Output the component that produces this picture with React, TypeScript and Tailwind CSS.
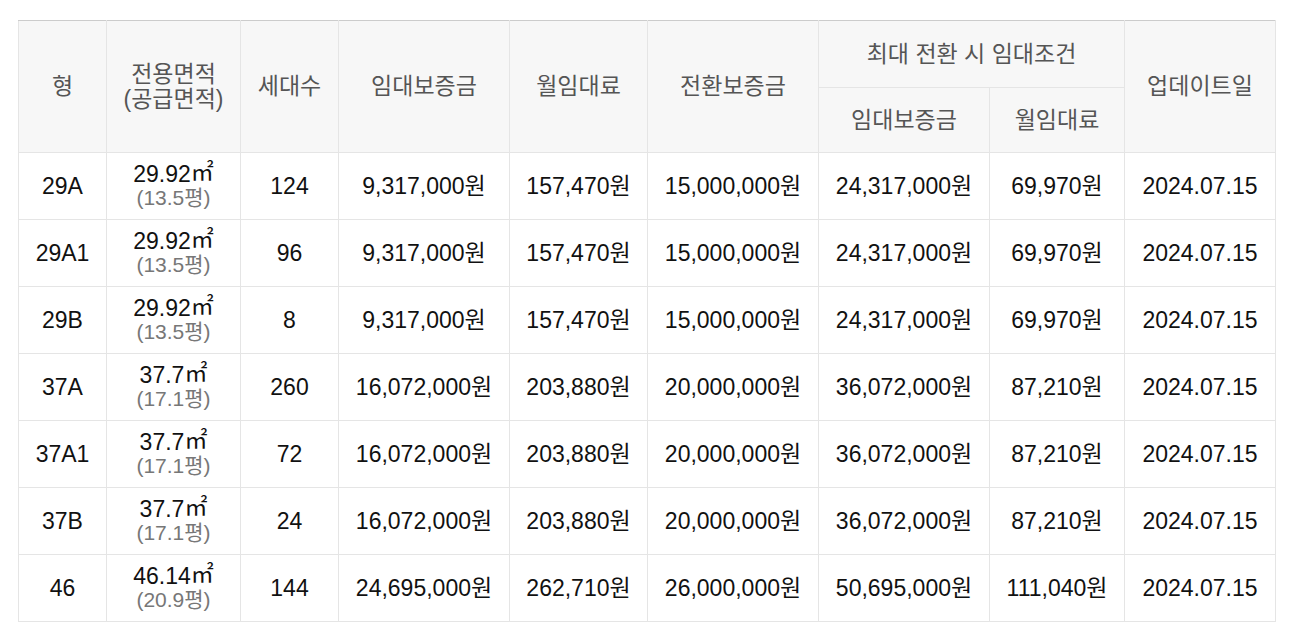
import React from 'react';

type Row = {
  type: string;
  area: string;
  pyeong: string;
  units: string;
  deposit: string;
  rent: string;
  convDeposit: string;
  maxDeposit: string;
  maxRent: string;
  updated: string;
};

const rows: Row[] = [
  { type: '29A', area: '29.92', pyeong: '13.5', units: '124', deposit: '9,317,000원', rent: '157,470원', convDeposit: '15,000,000원', maxDeposit: '24,317,000원', maxRent: '69,970원', updated: '2024.07.15' },
  { type: '29A1', area: '29.92', pyeong: '13.5', units: '96', deposit: '9,317,000원', rent: '157,470원', convDeposit: '15,000,000원', maxDeposit: '24,317,000원', maxRent: '69,970원', updated: '2024.07.15' },
  { type: '29B', area: '29.92', pyeong: '13.5', units: '8', deposit: '9,317,000원', rent: '157,470원', convDeposit: '15,000,000원', maxDeposit: '24,317,000원', maxRent: '69,970원', updated: '2024.07.15' },
  { type: '37A', area: '37.7', pyeong: '17.1', units: '260', deposit: '16,072,000원', rent: '203,880원', convDeposit: '20,000,000원', maxDeposit: '36,072,000원', maxRent: '87,210원', updated: '2024.07.15' },
  { type: '37A1', area: '37.7', pyeong: '17.1', units: '72', deposit: '16,072,000원', rent: '203,880원', convDeposit: '20,000,000원', maxDeposit: '36,072,000원', maxRent: '87,210원', updated: '2024.07.15' },
  { type: '37B', area: '37.7', pyeong: '17.1', units: '24', deposit: '16,072,000원', rent: '203,880원', convDeposit: '20,000,000원', maxDeposit: '36,072,000원', maxRent: '87,210원', updated: '2024.07.15' },
  { type: '46', area: '46.14', pyeong: '20.9', units: '144', deposit: '24,695,000원', rent: '262,710원', convDeposit: '26,000,000원', maxDeposit: '50,695,000원', maxRent: '111,040원', updated: '2024.07.15' },
];

const th = 'border border-[#e5e5e5] bg-[#f7f7f7] font-normal text-[#555555] text-center align-middle leading-[25px]';
const td = 'border border-[#e5e5e5] text-center align-middle text-[#111111] leading-[24px]';

export default function App() {
  return (
    <div className="bg-white pl-[18px] pt-[20px] pr-[17px] pb-[16px]">
      <table
        className="w-[1257px] table-fixed border-collapse border-t border-t-[#cccccc] text-[23px]"
        style={{ fontFamily: '"Liberation Sans", Arial, "Noto Sans CJK KR", sans-serif' }}
      >
        <colgroup>
          <col className="w-[88px]" />
          <col className="w-[134px]" />
          <col className="w-[98px]" />
          <col className="w-[171px]" />
          <col className="w-[138px]" />
          <col className="w-[171px]" />
          <col className="w-[171px]" />
          <col className="w-[135px]" />
          <col className="w-[151px]" />
        </colgroup>
        <thead>
          <tr className="h-[67px]">
            <th rowSpan={2} className={`${th} border-t-[#cccccc]`}>형</th>
            <th rowSpan={2} className={`${th} border-t-[#cccccc]`}>
              전용면적
              <br />
              (공급면적)
            </th>
            <th rowSpan={2} className={`${th} border-t-[#cccccc]`}>세대수</th>
            <th rowSpan={2} className={`${th} border-t-[#cccccc]`}>임대보증금</th>
            <th rowSpan={2} className={`${th} border-t-[#cccccc]`}>월임대료</th>
            <th rowSpan={2} className={`${th} border-t-[#cccccc]`}>전환보증금</th>
            <th colSpan={2} className={`${th} border-t-[#cccccc]`}>최대 전환 시 임대조건</th>
            <th rowSpan={2} className={`${th} border-t-[#cccccc]`}>업데이트일</th>
          </tr>
          <tr className="h-[65px]">
            <th className={th}>임대보증금</th>
            <th className={th}>월임대료</th>
          </tr>
        </thead>
        <tbody>
          {rows.map((r) => (
            <tr key={r.type} className="h-[67px]">
              <td className={td}>{r.type}</td>
              <td className={td}>
                <div className="leading-[23px]">
                  {r.area}
                  <span className="relative -top-[2px]">㎡</span>
                </div>
                <div className="text-[21px] leading-[24px] text-[#777777]">({r.pyeong}평)</div>
              </td>
              <td className={td}>{r.units}</td>
              <td className={td}>{r.deposit}</td>
              <td className={td}>{r.rent}</td>
              <td className={td}>{r.convDeposit}</td>
              <td className={td}>{r.maxDeposit}</td>
              <td className={td}>{r.maxRent}</td>
              <td className={td}>{r.updated}</td>
            </tr>
          ))}
        </tbody>
      </table>
    </div>
  );
}
